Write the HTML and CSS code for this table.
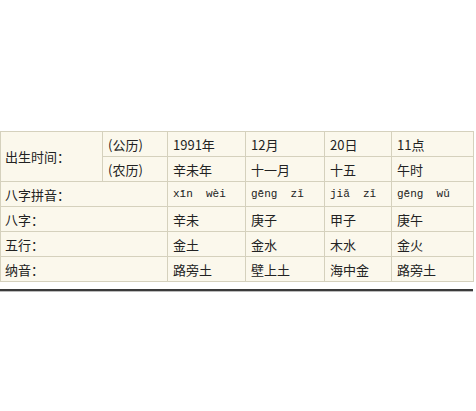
FILE: index.html
```html
<!DOCTYPE html>
<html>
<head>
<meta charset="utf-8">
<link rel="stylesheet" href="styles.css">
</head>
<body>
<div class="wrap">
<table class="bazi">
  <colgroup>
    <col class="c1"><col class="c2"><col class="c3"><col class="c4"><col class="c5"><col class="c6">
  </colgroup>
  <tr>
    <td rowspan="2" class="label">出生时间：</td>
    <td>(公历)</td>
    <td>1991年</td>
    <td>12月</td>
    <td>20日</td>
    <td>11点</td>
  </tr>
  <tr>
    <td>(农历)</td>
    <td>辛未年</td>
    <td>十一月</td>
    <td>十五</td>
    <td>午时</td>
  </tr>
  <tr>
    <td colspan="2" class="label">八字拼音：</td>
    <td class="py">xīn&nbsp;&nbsp;wèi</td>
    <td class="py">gēng&nbsp;&nbsp;zǐ</td>
    <td class="py">jiǎ&nbsp;&nbsp;zǐ</td>
    <td class="py">gēng&nbsp;&nbsp;wǔ</td>
  </tr>
  <tr>
    <td colspan="2" class="label">八字：</td>
    <td>辛未</td><td>庚子</td><td>甲子</td><td>庚午</td>
  </tr>
  <tr>
    <td colspan="2" class="label">五行：</td>
    <td>金土</td><td>金水</td><td>木水</td><td>金火</td>
  </tr>
  <tr>
    <td colspan="2" class="label">纳音：</td>
    <td>路旁土</td><td>壁上土</td><td>海中金</td><td>路旁土</td>
  </tr>
</table>
<div class="rule"></div>
</div>
</body>
</html>
```
FILE: styles.css
```css
html, body {
  margin: 0;
  padding: 0;
  background: #ffffff;
}
.wrap {
  padding-top: 131px;
  width: 473px;
}
.bazi {
  border-collapse: collapse;
  table-layout: fixed;
  width: 473px;
  background: #fbf8ec;
  font-family: "Noto Sans CJK SC", "Noto Sans", sans-serif;
  font-size: 13px;
  color: #222;
}
.c1 { width: 102px; }
.c2 { width: 65px; }
.c3 { width: 78px; }
.c4 { width: 79px; }
.c5 { width: 67px; }
.c6 { width: 82px; }
.bazi td {
  border: 1px solid #d5d1bd;
  height: 24px;
  padding: 0 5px;
  line-height: 15px;
  vertical-align: middle;
  white-space: nowrap;
}
.bazi tr:first-child td {
  height: 24px;
}
.bazi td.label {
  padding-left: 4px;
}
.bazi td.py {
  font-family: "Liberation Mono", "DejaVu Sans Mono", monospace;
  font-size: 11px;
}
.rule {
  margin-top: 7px;
  height: 2px;
  background: #3a3a3a;
  border-bottom: 1px solid #bbb;
}
```
